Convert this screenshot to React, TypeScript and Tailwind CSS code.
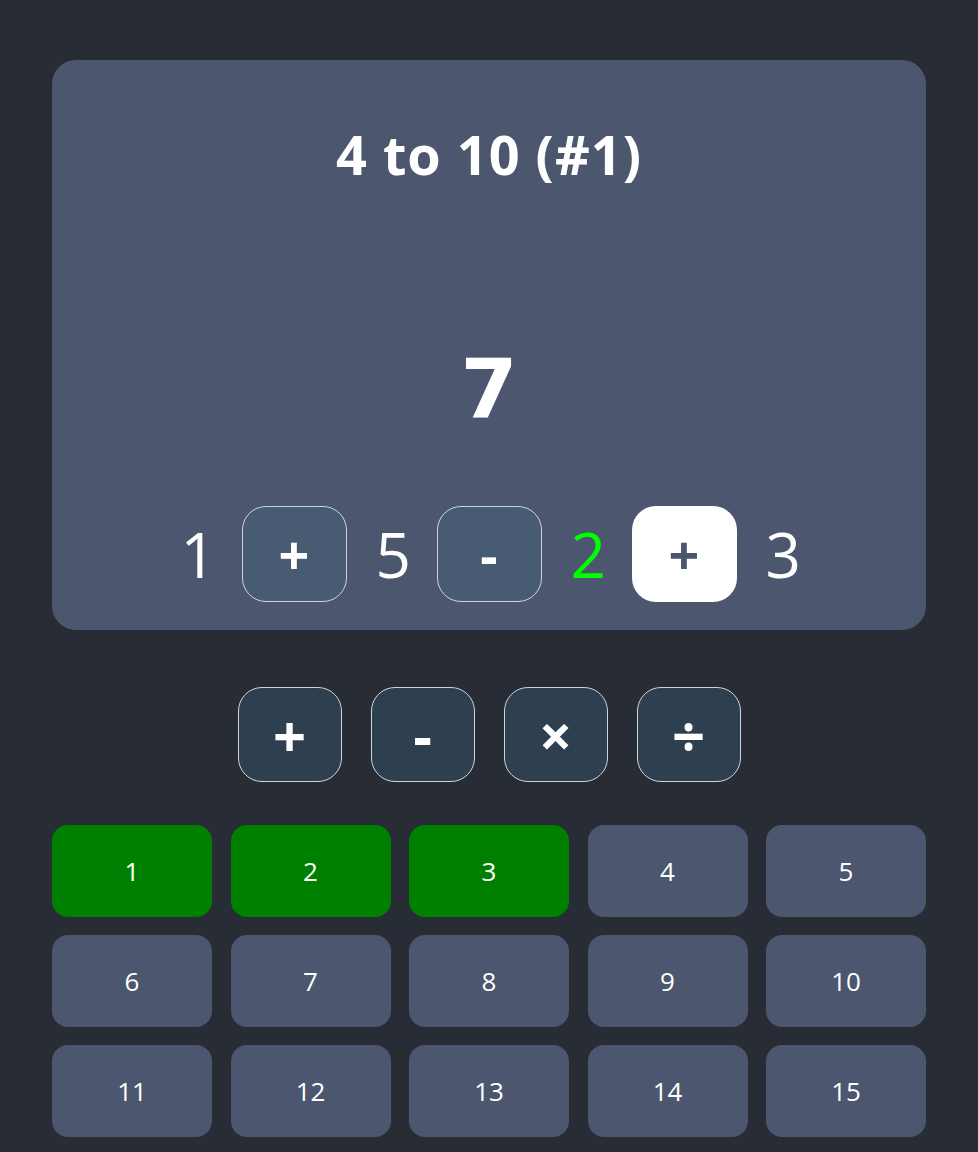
const operands = [
  { kind: 'num', value: '1' },
  { kind: 'op', value: '+' },
  { kind: 'num', value: '5' },
  { kind: 'op', value: '-' },
  { kind: 'num', value: '2', used: true },
  { kind: 'op', value: '+', active: true },
  { kind: 'num', value: '3' },
];

const ops = ['+', '-', '×', '÷'];

const tiles = Array.from({ length: 15 }, (_, i) => i + 1);
const solved = [1, 2, 3];

export default function App() {
  return (
    <div className="min-h-[1152px] bg-[#282c34] pt-[60px] font-['Open_Sans','Noto_Sans',sans-serif] text-white">
      <div className="mx-auto w-[874px]">
        <div className="flex flex-col items-center rounded-[24px] bg-[#4c566e] pt-[67px] pb-[28px]">
          <h1 className="text-[54px] leading-[54px] font-bold tracking-[1px]">4 to 10 (#1)</h1>
          <div className="mt-[168px] font-['DejaVu_Sans',sans-serif] text-[82px] leading-[82px] font-bold">7</div>
          <div className="mt-[75px] flex items-center gap-[29px]">
            {operands.map((o, i) =>
              o.kind === 'num' ? (
                <span
                  key={i}
                  className={`w-[32px] text-center text-[62px] leading-[96px] font-normal ${o.used ? 'text-[#00ff00]' : 'text-white'}`}
                >
                  {o.value}
                </span>
              ) : (
                <button
                  key={i}
                  className={
                    o.active
                      ? 'flex h-[96px] w-[105px] items-center justify-center rounded-[24px] bg-white text-[54px] font-bold text-[#4c566e]'
                      : 'flex h-[96px] w-[105px] items-center justify-center rounded-[24px] border border-[#d0d4da] bg-[#475c72] text-[54px] font-bold text-white'
                  }
                >
                  {o.value}
                </button>
              )
            )}
          </div>
        </div>

        <div className="mt-[57px] flex justify-center gap-[29px]">
          {ops.map((op) => (
            <button
              key={op}
              className="flex h-[95px] w-[104px] items-center justify-center rounded-[24px] border border-[#d0d4da] bg-[#2e4050] text-[58px] font-bold text-white"
            >
              {op}
            </button>
          ))}
        </div>

        <div className="mt-[43px] grid grid-cols-5 gap-x-[18.5px] gap-y-[18px]">
          {tiles.map((n) => (
            <button
              key={n}
              className={`h-[92px] rounded-[16px] text-[26px] ${solved.includes(n) ? 'bg-[#008000]' : 'bg-[#4c566e]'}`}
            >
              {n}
            </button>
          ))}
        </div>
      </div>
    </div>
  );
}
